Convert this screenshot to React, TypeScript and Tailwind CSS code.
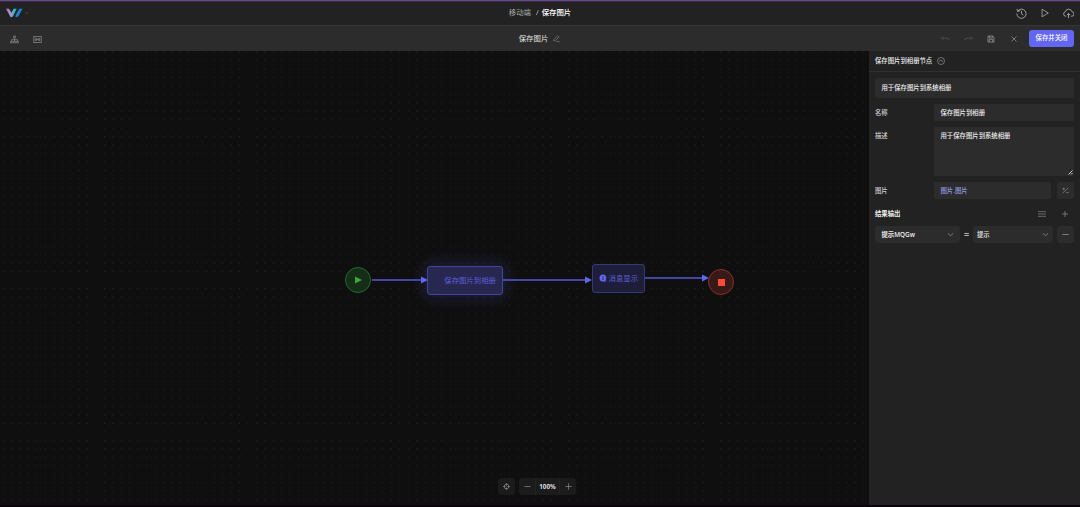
import type { ReactNode } from "react";

interface IconProps {
  className?: string;
  size?: number;
  stroke?: number;
  children: ReactNode;
}

function Icon({ className = "", size = 10, stroke = 2, children }: IconProps) {
  return (
    <svg
      width={size}
      height={size}
      viewBox="0 0 24 24"
      fill="none"
      stroke="currentColor"
      strokeWidth={stroke}
      className={`shrink-0 ${className}`}
    >
      {children}
    </svg>
  );
}

function Logo() {
  return (
    <svg width="17" height="10" viewBox="0 0 17 10" className="shrink-0">
      <defs>
        <linearGradient id="logo-left" x1="0" y1="0" x2="1" y2="1">
          <stop offset="0" stopColor="#c06fc4" />
          <stop offset="0.6" stopColor="#a592cc" />
          <stop offset="1" stopColor="#7fa6cf" />
        </linearGradient>
        <linearGradient id="logo-mid" x1="1" y1="0" x2="0" y2="1">
          <stop offset="0" stopColor="#12c3cf" />
          <stop offset="1" stopColor="#82a3d0" />
        </linearGradient>
      </defs>
      <path d="M7.600 0.800h3L7 8.200Q6 9.600 4.800 8.600L4.200 7z" fill="url(#logo-mid)" />
      <path d="M0 0.800h3l3.600 5.600-1.200 3Q4.600 9.200 4 8z" fill="url(#logo-left)" />
      <path d="M13.200 0.800h3.400L12.500 8q-.9 1.500-3.200.8l-.1-.6z" fill="#1d7fd0" />
    </svg>
  );
}

function Header() {
  return (
    <header className="relative flex h-[25px] shrink-0 items-center justify-between border-t border-[#65498a] bg-[#222222] pr-[6px] pl-[6px] shadow-[inset_0_1px_0_#3a2f49]">
      <div className="flex items-center gap-[2px]">
        <Logo />
        <Icon size={4} stroke={4} className="text-[#5a5a5a]">
          <path d="M3 8l9 8 9-8" />
        </Icon>
      </div>
      <div className="absolute inset-x-0 flex justify-center text-[7.4px]">
        <span className="text-[#a8a8a8]">移动端</span>
        <span className="mr-[3px] ml-[5px] text-[#c8c8c8]">/</span>
        <span className="font-medium text-white">保存图片</span>
      </div>
      <div className="flex items-center gap-[13px] text-[#a8a8a8]">
        <Icon size={11}>
          <path d="M4 6.5A10 10 0 1 1 2 12M2 2l1.5 5.5L9 6M12 6.500v6l4 3" />
        </Icon>
        <Icon size={10}>
          <path d="M5 3v18l15-9z" />
        </Icon>
        <Icon size={11}>
          <path d="M7 18H6a5 5 0 0 1-1-9.800A7.500 7.500 0 0 1 19.500 8a5 5 0 0 1-1 10H17M12 22V12M8.500 15.500L12 12l3.500 3.500" />
        </Icon>
      </div>
    </header>
  );
}

function Toolbar() {
  return (
    <div className="relative flex h-[26px] shrink-0 items-center justify-between border-t border-[#363636] bg-[#2c2c2c] pr-[6px] pl-[10px]">
      <div className="flex items-center gap-[14px] pt-px text-[#858585]">
        <Icon size={9}>
          <path d="M9.500 2.500h5v5h-5zM12 7.500v5M4 17v-4.500h16V17M12 12.500V17M1.500 17h5v4h-5zM9.500 17h5v4h-5zM17.500 17h5v4h-5z" />
        </Icon>
        <Icon size={9}>
          <path d="M1 4h22M1 20h22M2 4v16M22 4v16M6 9h3v6H6zM15 9h3v6h-3zM9 12h6" />
        </Icon>
      </div>
      <div className="absolute inset-x-0 flex items-center justify-center gap-[5px] pr-[1px] text-[7.4px] text-[#e2e2e2]">
        <span>保存图片</span>
        <Icon size={7} className="mt-px text-[#8a8a8a]">
          <path d="M3 16L16 2l5 5L8 19l-6 1zM10 22.500h13" />
        </Icon>
      </div>
      <div className="relative flex items-center text-[#a5a5a5]">
        <Icon size={9} stroke={1.500} className="mr-[14.500px] text-[#666666]">
          <path d="M6 7l-4 4 4 4M2 11h13q6 0 7 5" />
        </Icon>
        <Icon size={9} stroke={1.500} className="mr-[14px] text-[#666666]">
          <path d="M18 7l4 4-4 4M22 11H9q-6 0-7 5" />
        </Icon>
        <Icon size={8} className="mr-[16px]">
          <path d="M3 3h14l4 4v14H3zM7 3v6h9V3M7 21v-8h10v8" />
        </Icon>
        <Icon size={6} stroke={2.500} className="mr-[12px]">
          <path d="M2 2l20 20M22 2L2 22" />
        </Icon>
        <button className="h-[17px] w-[45px] rounded-[3px] bg-[#6366f1] text-[6.400px] leading-none font-medium text-white">
          保存并关闭
        </button>
      </div>
    </div>
  );
}

function Arrow({ className, width }: { className: string; width: number }) {
  return (
    <svg width={width} height="8" className={`absolute ${className}`}>
      <path d={`M0 4H${width - 5}`} stroke="#5658d3" strokeWidth="1.4" />
      <path d={`M${width - 7} .4L${width} 4l-7 3.600z`} fill="#6366f1" />
    </svg>
  );
}

function Canvas() {
  return (
    <main className="relative flex-1 overflow-hidden bg-[#0f0f0f] bg-[radial-gradient(circle_at_center,#272727_0,#222222_0.4px,transparent_0.9px)] bg-[size:8.450px_8.450px] bg-[position:-1px_-3px]">
      <div className="absolute top-[216px] left-[345.400px] flex size-[26px] items-center justify-center rounded-full border border-[#27682d] bg-[#162d19]">
        <svg width="7" height="8" className="ml-px">
          <path d="M0 0.500l7 3.500-7 3.500z" fill="#3aaa40" />
        </svg>
      </div>
      <Arrow className="top-[225px] left-[371.500px]" width={56} />
      <div className="absolute top-[214.500px] left-[427px] flex h-[29.500px] w-[76px] items-center justify-end rounded-[3px] border border-[#4245a0] bg-[#28274f] pr-[6px] text-[7.4px] text-[#5c5fd9] shadow-[0_0_16px_3px_rgba(99,102,241,0.2)]">
        保存图片到相册
      </div>
      <Arrow className="top-[225.400px] left-[503px]" width={89} />
      <div className="absolute top-[212.500px] left-[591.500px] flex h-[29.500px] w-[53.500px] items-center gap-[2px] rounded-[3px] border border-[#363879] bg-[#1f1e3a] pl-[6px] text-[7.4px] text-[#5c5fd9]">
        <svg width="8" height="8" viewBox="0 0 16 16">
          <path d="M8 1a7 7 0 1 0 0 14h7l-2-2.500A7 7 0 0 0 8 1z" fill="#6366f1" />
          <path d="M8 4v1.800M8 7v5" stroke="#1f1e3a" strokeWidth="1.800" />
        </svg>
        消息显示
      </div>
      <Arrow className="top-[223.400px] left-[645px]" width={64} />
      <div className="absolute top-[218px] left-[708px] flex size-[26px] items-center justify-center rounded-full border border-[#8b3029] bg-[#371a18]">
        <div className="size-[7px] bg-[#ff4a35]" />
      </div>
      <ZoomBar />
    </main>
  );
}

function ZoomBar() {
  return (
    <div className="absolute top-[427px] left-[498px] flex gap-[4px] text-[#a0a0a0]">
      <div className="flex size-[17px] items-center justify-center rounded-[3px] bg-[#1b1b1b]">
        <Icon size={7}>
          <circle cx="12" cy="12" r="8" />
          <path d="M12 0v9M12 15v9M0 12h9M15 12h9" />
        </Icon>
      </div>
      <div className="flex h-[17px] w-[57px] items-center rounded-[3px] bg-[#1b1b1b]">
        <div className="flex w-[16px] justify-center">
          <Icon size={7}>
            <path d="M1 12h22" />
          </Icon>
        </div>
        <div className="flex h-full w-[25px] items-center justify-center border-x border-[#222222] text-[6.300px] font-bold text-[#dddddd]">
          100%
        </div>
        <div className="flex w-[16px] justify-center">
          <Icon size={7}>
            <path d="M1 12h22M12 1v22" />
          </Icon>
        </div>
      </div>
    </div>
  );
}

function SelectBox({ label, className }: { label: string; className: string }) {
  return (
    <div className={`flex h-[17px] items-center justify-between rounded-[3px] bg-[#2c2c2c] text-[#eeeeee] ${className}`}>
      <span>{label}</span>
      <Icon size={7} stroke={2.500} className="text-[#999999]">
        <path d="M3 8l9 8 9-8" />
      </Icon>
    </div>
  );
}

function Field({ label, children }: { label: string; children: ReactNode }) {
  return (
    <div className="flex">
      <div className="h-[17px] w-[59px] shrink-0 leading-[17px] text-[#d0d0d0]">{label}</div>
      {children}
    </div>
  );
}

function PropertyPanel() {
  return (
    <aside className="flex w-[211px] shrink-0 flex-col bg-[#222222] text-[6.370px] font-medium text-[#eeeeee]">
      <div className="flex h-[21px] shrink-0 items-center gap-[5px] border-b border-[#303030] pl-[6px]">
        保存图片到相册节点
        <Icon size={8} className="text-[#999999]">
          <circle cx="12" cy="12" r="10.500" />
          <path d="M6 14l6-5 6 5" />
        </Icon>
      </div>
      <div className="flex flex-col pt-[6px] pr-[6px] pl-[6px]">
        <div className="mb-[6px] flex h-[20px] items-center rounded-[3px] bg-[#2c2c2c] pl-[6.500px]">
          用于保存图片到系统相册
        </div>
        <div className="flex flex-col gap-[6px]">
          <Field label="名称">
            <div className="flex h-[17px] flex-1 items-center rounded-[2px] bg-[#2c2c2c] pl-[6.500px]">保存图片到相册</div>
          </Field>
          <Field label="描述">
            <div className="relative h-[49px] flex-1 rounded-[2px] bg-[#2c2c2c] pl-[6.500px] leading-[17px]">
              用于保存图片到系统相册
              <svg width="5" height="5" className="absolute right-[1px] bottom-[1px]">
                <path d="M0.500 4.500l4-4M3 4.500L4.500 3" stroke="#cccccc" />
              </svg>
            </div>
          </Field>
          <Field label="图片">
            <div className="flex h-[17px] w-[117px] items-center rounded-[2px] bg-[#2c2c2c] pl-[6.500px] text-[#929be0]">
              图片.图片
            </div>
            <div className="ml-[6px] flex size-[17px] items-center justify-center rounded-[3px] bg-[#2c2c2c] text-[#999999]">
              <Icon size={7}>
                <path d="M2 21L22 3M6 2v9M1.500 6.500h9M14 19h9" />
              </Icon>
            </div>
          </Field>
        </div>
        <div className="mt-[6px] mb-[4px] flex h-[17px] items-center">
          <span className="flex-1 font-bold">结果输出</span>
          <Icon size={8} className="mr-[16px] text-[#888888]">
            <path d="M0 5h24M0 12h24M0 19h24" />
          </Icon>
          <Icon size={6} stroke={3} className="mr-[6px] text-[#888888]">
            <path d="M12 0v24M0 12h24" />
          </Icon>
        </div>
        <div className="flex items-center">
          <SelectBox label="提示MQGw" className="w-[85px] pr-[6px] pl-[6.500px] font-semibold" />
          <span className="w-[13px] text-center text-[9px] leading-none font-bold text-[#b5b5b5]">=</span>
          <SelectBox label="提示" className="w-[80px] pr-[4px] pl-[4px]" />
          <div className="ml-[4px] flex size-[17px] items-center justify-center rounded-[3px] bg-[#2c2c2c] text-[#999999]">
            <Icon size={7} stroke={2.500}>
              <path d="M1 12h22" />
            </Icon>
          </div>
        </div>
      </div>
    </aside>
  );
}

export default function App() {
  return (
    <div className="flex h-[507px] w-[1080px] flex-col overflow-hidden border-b-2 border-[#090409] bg-[#0f0f0f] font-['Open_Sans','Noto_Sans_CJK_SC',sans-serif]">
      <Header />
      <Toolbar />
      <div className="flex min-h-0 flex-1">
        <Canvas />
        <PropertyPanel />
      </div>
    </div>
  );
}
